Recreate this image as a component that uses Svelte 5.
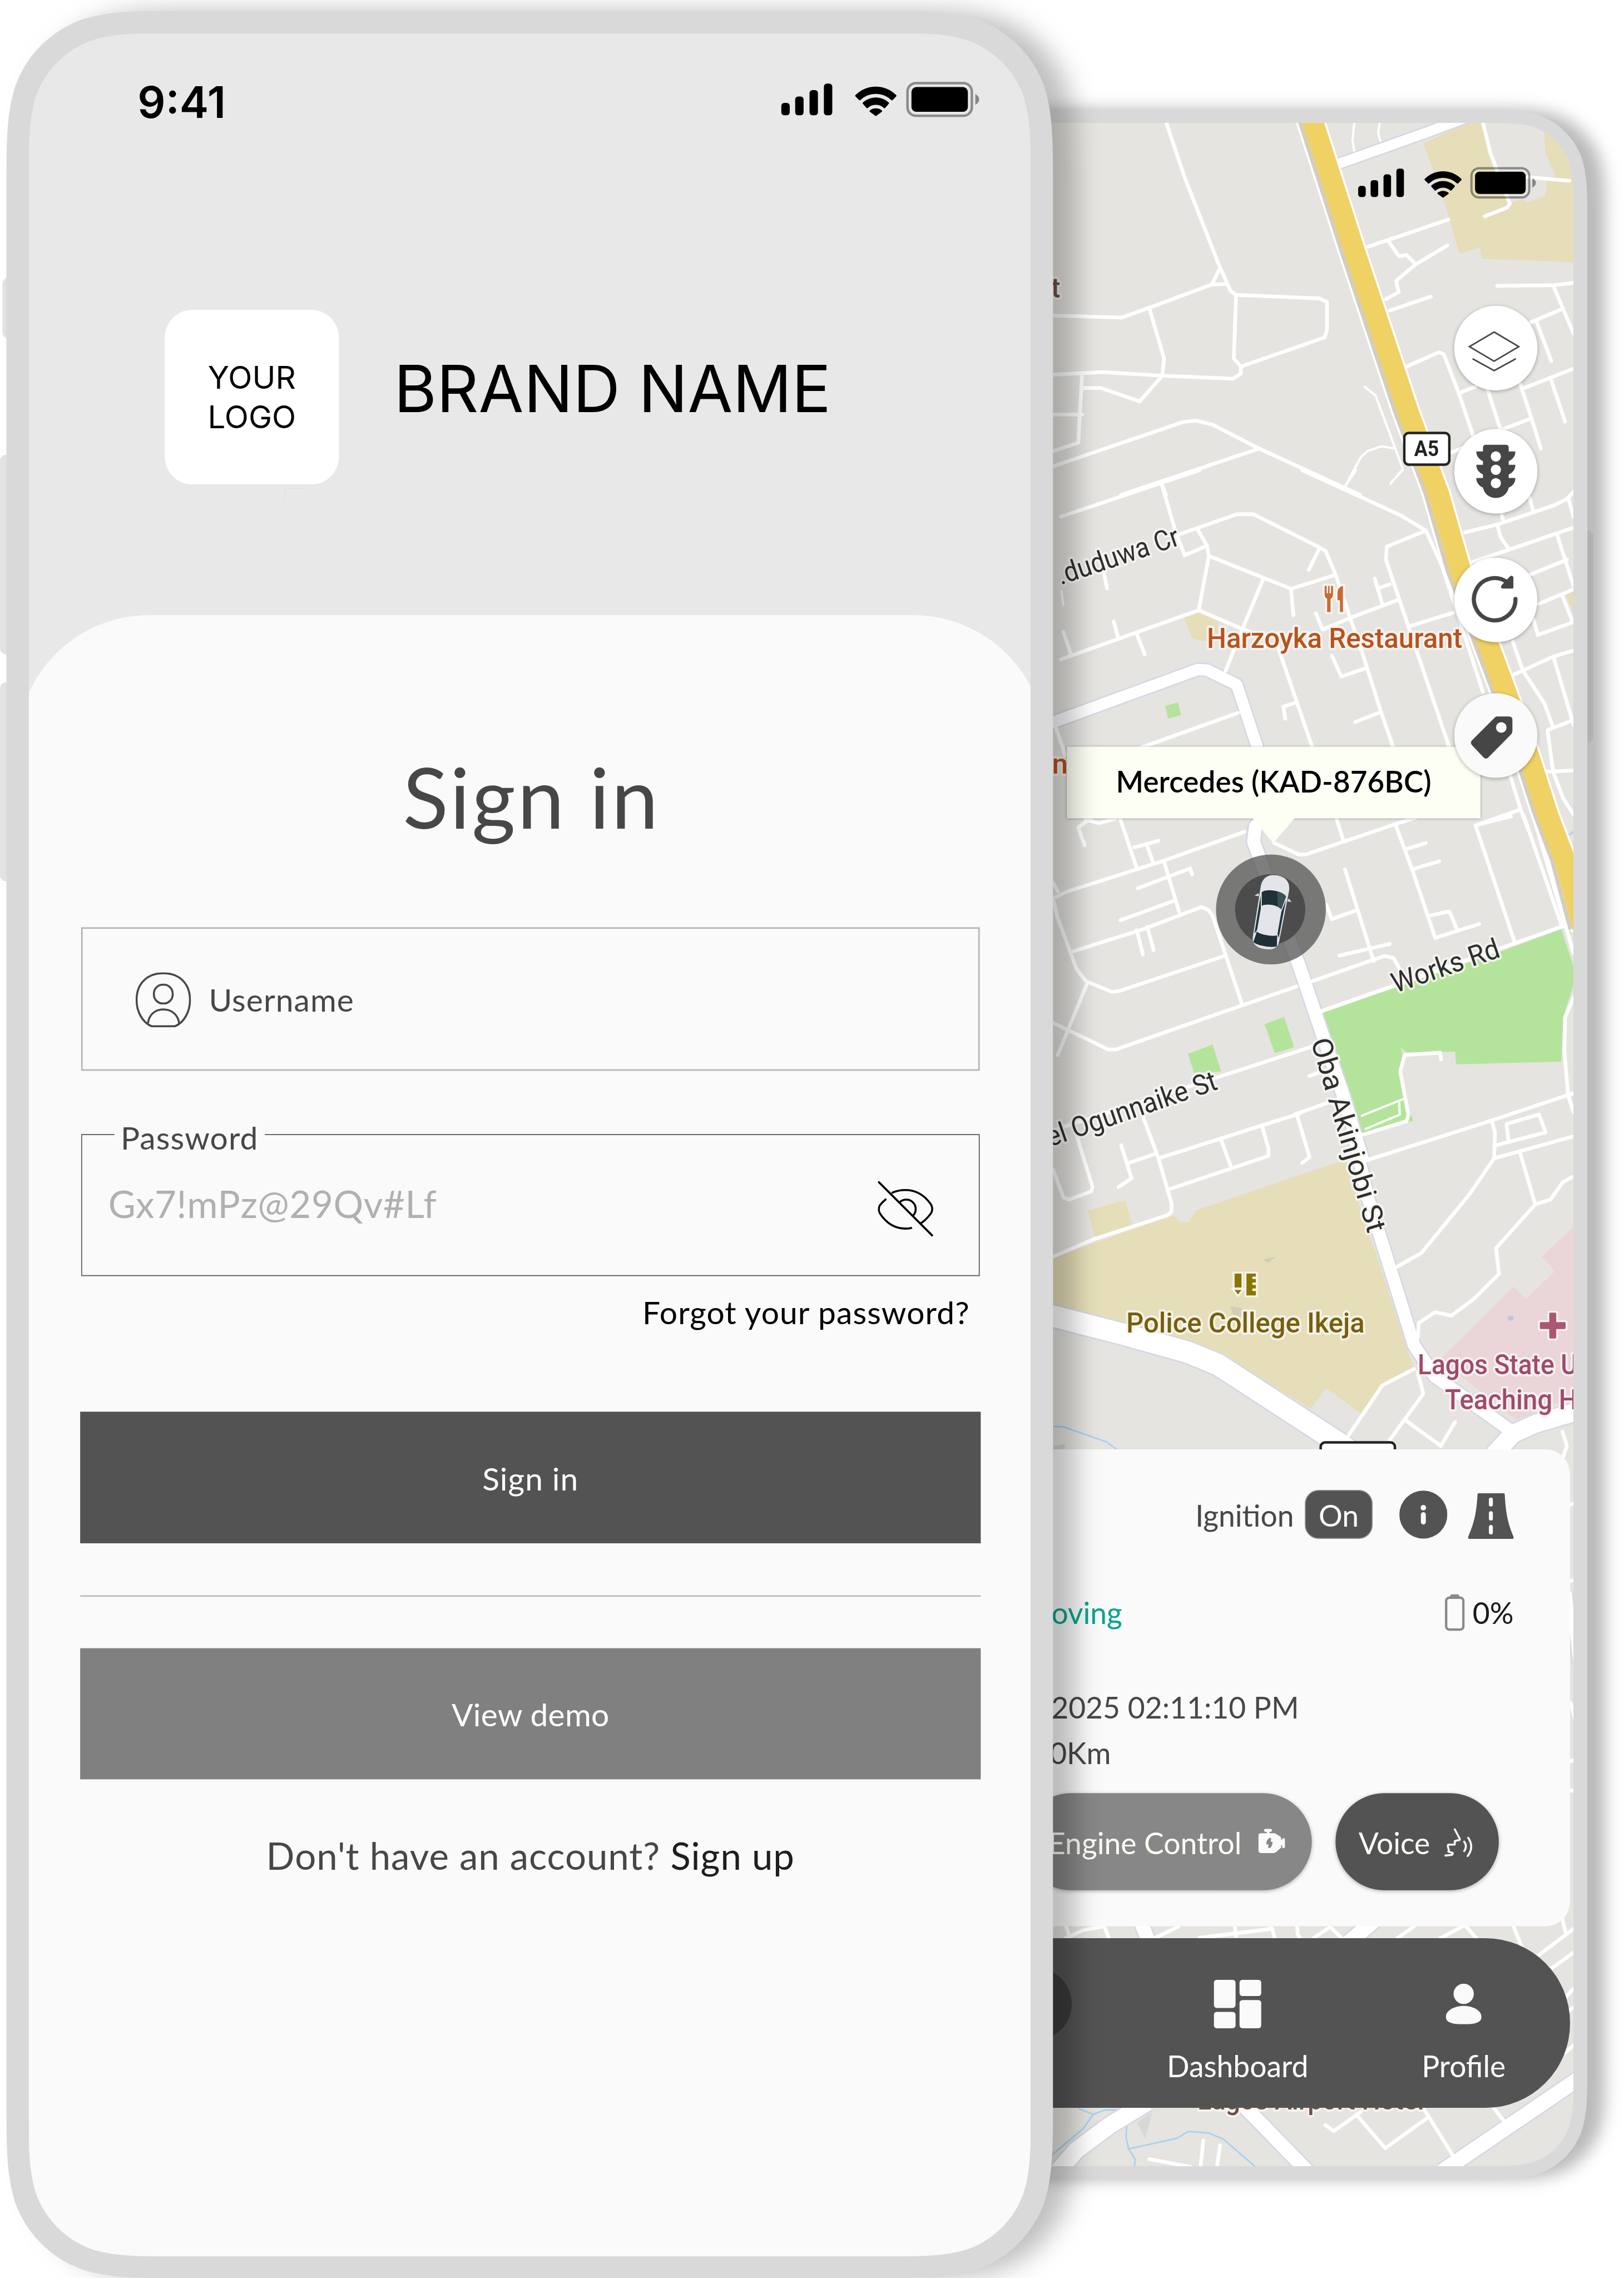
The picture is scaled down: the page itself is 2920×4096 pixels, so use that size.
<script>
  // Continuous-curvature rounded rectangle, as used for device outlines.
  function squircle(x, y, w, h, r) {
    const a = 1.528665 * r, b = 1.088493 * r, c = 0.868407 * r;
    const d = 0.631494 * r, e = 0.074911 * r, f = 0.372824 * r, g = 0.16906 * r;
    const X = x + w, Y = y + h;
    return [
      `M${x + a} ${y}L${X - a} ${y}`,
      `C${X - b} ${y} ${X - c} ${y} ${X - d} ${y + e}`,
      `C${X - f} ${y + g} ${X - g} ${y + f} ${X - e} ${y + d}`,
      `C${X} ${y + c} ${X} ${y + b} ${X} ${y + a}`,
      `L${X} ${Y - a}C${X} ${Y - b} ${X} ${Y - c} ${X - e} ${Y - d}`,
      `C${X - g} ${Y - f} ${X - f} ${Y - g} ${X - d} ${Y - e}`,
      `C${X - c} ${Y} ${X - b} ${Y} ${X - a} ${Y}`,
      `L${x + a} ${Y}C${x + b} ${Y} ${x + c} ${Y} ${x + d} ${Y - e}`,
      `C${x + f} ${Y - g} ${x + g} ${Y - f} ${x + e} ${Y - d}`,
      `C${x} ${Y - c} ${x} ${Y - b} ${x} ${Y - a}`,
      `L${x} ${y + a}C${x} ${y + b} ${x} ${y + c} ${x + e} ${y + d}`,
      `C${x + g} ${y + f} ${x + f} ${y + g} ${x + d} ${y + e}`,
      `C${x + c} ${y} ${x + b} ${y} ${x + a} ${y}Z`,
    ].join('');
  }

  const backOuter = squircle(0, 0, 1931, 4184, 155);
  const backInner = `path("${squircle(0, 0, 1875, 4130, 125)}")`;
  const frontOuter = squircle(0, 0, 2115, 4582, 240);
  const frontInner = `path("${squircle(0, 0, 2025, 4493, 200)}")`;

  // Each map tile has its own origin and scale; shapes are listed in tile units.
  const tiles = [
    {
      x: 2100, y: 200, sx: 0.7538, sy: 0.5102,
      sand: ['1030,175 1150,94 1192,94 1213,215 1262,415 1300,395 1305,412 1357,385 1362,325 1385,305 1357,210 1353,94 1433,94 1433,648 1320,640 1187,633 1182,588 1127,613 1085,400'],
      wide: [{ p: '1170,60 1040,132 800,258', w: 20 }],
      minor: [
        '340,90 390,310 480,650 513,760 528,776 752,790 772,804 772,915 765,945 541,1060 541,1088 520,1108 330,1096 170,1082 38,1092',
        '485,670 463,735 503,733', '463,735 295,827 222,866 38,858',
        '295,827 335,1028 330,1096 270,1198 165,1145 115,1145', '528,776 522,1028 541,1060',
        '115,1095 105,1362 38,1395', '38,1250 115,1250',
        '38,1455 385,1280 420,1274 465,1290 590,1385 860,1568', '590,1385 220,1568', '328,1522 340,1568',
        '882,585 1097,478', '935,560 965,623 985,618 1010,655 957,720 964,765 930,793',
        '1010,655 1095,580', '940,838 1050,783', '985,1060 1072,1003 1085,1012 1125,1165 1165,1340',
        '1125,1165 1170,1140', '1190,94 1210,215 1262,415 1255,430 1195,465', '1310,310 1422,324',
        '1228,740 1380,738 1433,728', '1380,745 1433,930', '1405,830 1318,885', '1333,880 1373,1038',
        '1433,1068 1295,1148', '1373,1115 1410,1278', '1200,1140 1237,1310',
        '1290,1130 1320,1265 1345,1385', '1320,1265 1240,1310', '1105,1400 1140,1380',
      ],
      thin: [
        '845,94 840,165 845,205', '913,94 909,135 915,165', '873,1140 902,1175 975,1465 942,1525',
        '955,1385 918,1376 880,1395 862,1420 820,1535',
      ],
    },
    {
      x: 2100, y: 950, sx: 0.7538, sy: 0.5102,
      sand: ['388,585 428,567 480,598 478,650 452,680 410,668', '1410,490 1433,475 1433,565'],
      green: ['338,935 372,920 381,970 346,985'],
      wide: [{ p: '20,1008 425,790 450,792 530,850 590,1120', w: 23 }],
      minor: [
        '430,0 58,185', '328,52 365,240', '365,240 390,338 450,300',
        '365,260 530,175 575,175 750,305 768,320 795,415 835,590 870,740 917,960 950,1100',
        '750,315 723,395', '795,415 675,470 455,340 450,300 425,235', '455,340 428,555 58,750',
        '428,555 545,630 600,660', '675,470 682,575', '200,600 212,665', '262,650 283,730',
        '65,640 85,730', '173,400 182,468', '705,0 970,180 1037,240 932,303 930,355 990,620 1100,1100',
        '1037,240 1080,380 1190,880', '990,620 1110,565', '960,515 835,585 760,632 742,568',
        '900,430 920,530', '910,468 940,452', '640,700 690,915 733,1100', '690,920 655,937 660,985',
        '785,735 810,818 875,785', '917,958 847,998', '533,962 272,1100', '45,1020 70,1130',
        '600,435 545,630 500,795',
        '1142,247 1230,215 1380,140 1415,115 1433,85', '1315,110 1325,165', '1240,175 1245,205',
        '1418,110 1433,185', '1160,365 1255,318 1433,228', '1228,215 1237,265 1260,315',
        '1390,262 1433,460', '1315,415 1415,355', '1340,530 1433,472', '1402,495 1430,600',
        '1433,602 1337,653 1325,590', '1270,680 1297,795 1355,925 1378,1020', '1270,812 1380,738 1433,715',
        '1380,745 1433,1010', '1433,990 1363,1030 1378,1195 1405,1300 1433,1365', '1355,1195 1433,1190',
        '1240,1100 1290,1340 1310,1420', '1290,1170 1335,1400', '1175,1405 1290,1345',
      ],
      thin: ['850,0 820,65', '975,0 942,52', '60,480 65,535'],
      water: ['1420,1445 1433,1432'],
    },
    {
      x: 2100, y: 1650, sx: 0.7538, sy: 0.4464,
      green: [
        '750,890 945,780 1240,610 1400,510 1433,680 1433,760 1405,910 1400,1110 1118,1122 1115,1065 985,1068 968,1045 975,1080 965,1155 980,1270 1003,1378 860,1440 845,1300 800,1100 765,930',
        '604,940 657,908 684,1045 632,1072', '399,1075 465,1033 488,1155 415,1160',
      ],
      wide: [{ p: '600,15 580,45 575,115 600,230 700,690 760,990 815,1260 870,1568', w: 26 }],
      minor: [
        '145,0 105,50 122,130', '125,15 160,30 205,10', '215,0 262,235', '255,140 320,110',
        '290,135 305,205', '38,370 75,340 335,200 550,70', '335,205 375,430', '265,325 405,235 410,262',
        '365,380 218,470', '93,610 280,510 435,410 455,425 465,450 545,855', '262,515 278,625',
        '290,500 307,605', '38,380 50,460 100,690 125,745 195,795 215,790 500,630', '130,750 50,1080',
        '38,935 185,1055 205,1055 545,855 690,770', '725,750 925,632 950,640 970,700',
        '630,120 695,172 715,172 955,35 1010,5', '795,0 815,105', '955,35 1000,240 1062,550 1180,487',
        '980,150 1037,120', '1000,240 1073,203', '1045,450 1100,430 1120,510', '1170,40 1275,570',
        '1170,40 1265,0', '1300,0 1400,490', '1325,0 1433,620', '820,240 897,655',
        '770,400 785,465 850,425', '805,630 940,577', '750,885 1240,595 1433,480',
        '1433,820 1410,910 1408,1060 1418,1260 1433,1340', '735,1040 480,1180 38,1420',
        '725,1175 750,1160', '800,1280 685,1350', '38,300 50,340',
        '1078,1100 1075,1070 980,1080 968,1155 990,1350 985,1380 860,1445',
      ],
      thin: ['865,1355 975,1280', '965,1290 967,1350 875,1415', '750,890 1240,600'],
    },
    {
      x: 2100, y: 2250, sx: 0.7538, sy: 0.4783,
      sand: [
        '38,610 350,435 365,437 380,460 400,460 420,410 800,207 825,210 870,450 905,600 985,990 1005,1080 920,1145 865,1272 770,1162 728,1248 480,1010 230,885 38,805',
        '130,412 230,367 250,475 152,528',
      ],
      pink: ['1433,480 1348,605 1383,668 1305,785 1272,732 1075,1040 1280,1295 1380,1230 1433,1200'],
      blobFill: '#d5cdb5',
      blob: ['600,618 635,605 615,632', '512,815 545,822 540,860 520,850'],
      wide: [
        { p: '845,100 880,350 910,500 960,750 1005,980 1060,1110 1290,1370', w: 25 },
        { p: '20,850 230,935 400,1010 480,1062 800,1390 900,1500', w: 43 },
        { p: '1453,1255 1330,1312 1270,1355 1220,1440', w: 36 },
      ],
      minor: [
        '275,0 320,190 355,380 355,415 345,430 150,530 38,605', '38,240 65,355 80,365 140,330 143,310 100,90',
        '220,135 248,275 213,312', '240,210 310,172', '320,190 700,0', '487,108 513,220',
        '350,320 615,180 615,150 597,50', '690,0 725,185 705,210', '875,200 1210,32 1433,-85',
        '1215,40 1222,80 1220,190 1155,340 1025,590 958,650', '1225,135 1358,80 1340,5 1253,45 1258,110',
        '1220,190 1433,97', '1290,170 1330,385',
        '1433,267 1405,290 1370,365 1330,385 1225,570 1233,678 1165,785 1105,855 1062,840 1018,885 1015,950',
        '1005,1080 920,1150 830,1360', '1015,1095 1030,1185 940,1380', '985,1300 1077,1405 1115,1305',
        '1403,1345 1415,1405 1405,1450',
      ],
      water: ['38,1323 65,1325 180,1388 208,1420'],
    },
    {
      x: 2100, y: 2880, sx: 0.7538, sy: 0.7015,
      wide: [{ p: '1420,480 1440,690', w: 12 }],
      minor: ['1420,230 1440,225', '1420,450 1440,445', '1420,970 1440,962', '1420,1055 1440,1050', '1425,800 1440,860'],
      blobFill: '#d2d1cd',
      blob: ['40,60 70,55 66,70 38,72'],
    },
    {
      x: 2100, y: 3850, sx: 0.7538, sy: 0.4809,
      blobFill: '#d7d7d5',
      blob: ['303,870 262,915 285,980'],
      wide: [
        { p: '270,60 298,170', w: 28 }, { p: '910,50 820,170', w: 30 },
        { p: '290,830 190,925 100,1030 50,1120', w: 34 }, { p: '540,830 720,1120', w: 28 },
        { p: '1453,723 1080,1120', w: 30 },
      ],
      minor: [
        '72,88 82,135', '70,140 120,105 165,92', '175,90 187,140', '372,92 310,138', '525,88 527,130',
        '430,138 625,100 620,90', '625,100 632,140', '692,90 693,122 700,140', '735,140 780,92 812,140',
        '1005,90 960,140', '1145,90 1172,140', '1135,90 1075,140', '1272,90 1295,180', '1433,100 1340,210',
        '1403,60 1412,120', '1433,200 1370,270', '1433,350 1405,400', '1433,430 1420,445',
        '1433,590 1410,620', '768,925 790,950 862,870', '850,880 928,1022 1045,890 1108,1050',
        '1045,890 1030,855', '1220,855 1245,905', '295,1068 405,1100', '440,990 433,1098', '485,1010 477,1098',
      ],
      water: [
        '35,1050 118,940 145,880 105,855', '145,880 175,862 215,860',
        '235,925 233,975 240,1025 258,1070 255,1100', '240,1025 370,980 400,952 455,958 495,985 578,1098',
      ],
    },
  ];

  function place(tile, points) {
    return points
      .split(' ')
      .map((pair) => {
        const [px, py] = pair.split(',').map(Number);
        return `${(tile.x + px * tile.sx).toFixed(1)},${(tile.y + py * tile.sy).toFixed(1)}`;
      })
      .join(' ');
  }

  const highway = '2648,225 2654,248 2737,506 2846,833 2908,1000 2952,1154 3042,1394 3091,1532 3129,1650 3163,1739 3200,1878';
</script>

{#snippet statusIcons()}
  <svg class="status-icons" viewBox="0 0 402 72">
    <rect x="2" y="43" width="17" height="25" rx="6" />
    <rect x="30" y="30" width="17" height="38" rx="6" />
    <rect x="59" y="17" width="17" height="51" rx="6" />
    <rect x="88" y="4" width="17" height="64" rx="6" />
    <path d="M193 10c16 0 30 6 41 17 1 1 1 2 0 3l-7 7c-1 1-2 1-3 0a45 45 0 0 0-62 0c-1 1-2 1-3 0l-7-7c-1-1-1-2 0-3 11-11 25-17 41-17z" />
    <path d="M193 32c10 0 19 4 26 10 1 1 1 2 0 3l-7 8c-1 1-2 1-3 0a24 24 0 0 0-32 0c-1 1-2 1-3 0l-7-8c-1-1-1-2 0-3 7-6 16-10 26-10z" />
    <path d="M193 54c5 0 9 2 12 4 1 1 1 2 0 3l-11 8c-1 1-1 1-2 0l-11-8c-1-1-1-2 0-3 3-2 7-4 12-4z" />
    <rect x="257" y="3" width="130" height="66" rx="17" fill="none" stroke="#000" stroke-opacity=".4" stroke-width="5" />
    <rect x="265" y="11" width="114" height="50" rx="10" />
    <path d="M394 25c5 3 8 7 8 11s-3 8-8 11z" fill-opacity=".42" />
  </svg>
{/snippet}

<div class="viewport">
  <div class="stage">
    <section class="device back">
      <svg class="shell" viewBox="0 0 1931 4184">
        <path d={backOuter} />
      </svg>
      <span class="side-key power"></span>
      <div class="screen map-screen" style:clip-path={backInner}>
        <svg class="map" viewBox="1305 248 1875 4130">
          <rect x="1305" y="248" width="1875" height="4130" fill="#e5e4e0" />
          {#each tiles as tile}
            {#each tile.sand ?? [] as p}<polygon points={place(tile, p)} fill="#e5deb9" />{/each}
            {#each tile.green ?? [] as p}<polygon points={place(tile, p)} fill="#b4e49b" />{/each}
            {#each tile.pink ?? [] as p}<polygon points={place(tile, p)} fill="#ead5d9" />{/each}
            {#each tile.blob ?? [] as p}<polygon points={place(tile, p)} fill={tile.blobFill} />{/each}
            {#each tile.water ?? [] as p}<polyline class="water" points={place(tile, p)} />{/each}
          {/each}
          {#each tiles as tile}
            {#each tile.wide ?? [] as r}<polyline class="casing" points={place(tile, r.p)} stroke-width={r.w + 6} />{/each}
          {/each}
          {#each tiles as tile}
            {#each tile.minor ?? [] as p}<polyline class="road" points={place(tile, p)} />{/each}
            {#each tile.thin ?? [] as p}<polyline class="road thin" points={place(tile, p)} />{/each}
            {#each tile.wide ?? [] as r}<polyline class="avenue" points={place(tile, r.p)} stroke-width={r.w} />{/each}
          {/each}
          <ellipse cx="3053" cy="2664" rx="6" ry="5" fill="#b9c6dc" />
          <polyline points={highway} fill="none" stroke="#fff" stroke-width="50" />
          <polyline points={highway} transform="translate(-33 0)" fill="none" stroke="#fff" stroke-width="4" />
          <polyline points={highway} transform="translate(-26 0)" fill="none" stroke="#d3cdbb" stroke-width="8" />
          <polyline points={highway} fill="none" stroke="#f0d163" stroke-width="42" />

          <g class="shield">
            <rect x="2838" y="875" width="91" height="64" rx="9" />
            <rect x="2669" y="2915" width="150" height="70" rx="9" />
            <text x="2858" y="922" textLength="50" lengthAdjust="spacingAndGlyphs">A5</text>
          </g>

          <g class="label street">
            <text transform="translate(2144 1182) rotate(-18.5)" textLength="256" lengthAdjust="spacingAndGlyphs">.duduwa Cr</text>
            <text transform="translate(2122 2318) rotate(-19)" textLength="361" lengthAdjust="spacingAndGlyphs">el Ogunnaike St</text>
            <text transform="translate(2820 2007) rotate(-19)" textLength="227" lengthAdjust="spacingAndGlyphs">Works Rd</text>
            <text transform="translate(2649 2104) rotate(73.5)" textLength="407" lengthAdjust="spacingAndGlyphs">Oba Akinjobi St</text>
          </g>
          <g class="label food">
            <text x="2439" y="1310" textLength="516" lengthAdjust="spacingAndGlyphs">Harzoyka Restaurant</text>
            <text x="2158" y="1563" text-anchor="end">n</text>
          </g>
          <g class="label lodging">
            <text x="2143" y="601" text-anchor="end">t</text>
            <text x="2420" y="4263" textLength="458" lengthAdjust="spacingAndGlyphs">Lagos Airport Hotel</text>
          </g>
          <g class="label school">
            <text x="2276" y="2693" textLength="482" lengthAdjust="spacingAndGlyphs">Police College Ikeja</text>
          </g>
          <g class="label clinic">
            <text x="2865" y="2777" textLength="323" lengthAdjust="spacingAndGlyphs">Lagos State U</text>
            <text x="2920" y="2848" textLength="268" lengthAdjust="spacingAndGlyphs">Teaching H</text>
          </g>

          <g class="poi" fill="#c96a30">
            <path d="M2677 1184h4v15h3v-15h3v15h3v-15h4v17c0 5-2 8-5 9v27h-7v-27c-3-1-5-4-5-9z" />
            <path d="M2714 1184v53h-6v-24h-5v-15c0-8 5-13 11-14z" />
          </g>
          <g class="poi" fill="#8a7500">
            <path d="M2495 2574h14v28h-14zM2495 2607h14l-7 9z" />
            <path d="M2519 2574h19v6h-7v5h7v7h-7v5h7v7h-7v5h7v9h-19z" />
          </g>
          <path class="poi" fill="#ac5674" d="M3133 2653h10q2 0 2 2v17h17q2 0 2 2v10q0 2-2 2h-17v17q0 2-2 2h-10q-2 0-2-2v-17h-17q-2 0-2-2v-10q0-2 2-2h17v-17q0-2 2-2z" />

          <circle cx="2568.5" cy="1838" r="111" fill="#555" fill-opacity=".76" />
          <circle cx="2567" cy="1838" r="71" fill="#444" fill-opacity=".85" />
          <g transform="translate(2568 1844) rotate(10)">
            <path d="M-31-34l-7 6 9 0zM31-34l7 6-9 0z" fill="#dfe1e6" />
            <path d="M0-76c18 0 28 9 29 26L27 55c-1 13-9 20-27 20s-26-7-27-20l-2-105c1-17 11-26 29-26z" fill="#e3e5ea" />
            <path d="M-25-37c8-10 42-10 50 0l-5 27c-8-7-32-7-40 0z" fill="#1d3136" />
            <path d="M6-44c8 1 15 3 19 7l-5 27-8-4z" fill="#3c5157" />
            <path d="M-26-30l5 25v45l-4 8zM26-30l-5 25v45l4 8z" fill="#20363b" />
            <path d="M-21 43c8 5 34 5 42 0l3 22c-8 6-40 6-48 0z" fill="#1d3136" />
          </g>
        </svg>

        <div class="status">{@render statusIcons()}</div>

        <div class="controls">
          <button class="round layers" aria-label="Layers">
            <svg viewBox="0 0 168 171" fill="none" stroke="#464646" stroke-width="3">
              <path d="M80.500 53l50 29.500-50 29.500-50-29.500zM37 107l43.500 24 44-24" />
            </svg>
          </button>
          <button class="round traffic" aria-label="Traffic">
            <svg viewBox="0 0 168 171" fill="#464646">
              <path d="M64 32h40q6 0 6 6v7.500h13.500c0 9-5 16-13.500 19.500v7.500h13.500c0 9-5 16-13.500 19.500v7h13.500c0 9-5 16-13.500 19.500-3 13-13 21-26 21s-23-8-26-21c-8-3.500-13.500-10.500-13.500-19.500H58v-7c-8-3.500-13.500-10.500-13.500-19.500H58V65c-8-3.500-13.500-10.500-13.500-19.500H58V38q0-6 6-6z" />
              <circle cx="84" cy="55.500" r="10.300" fill="#fff" />
              <circle cx="84" cy="82.500" r="10.300" fill="#fff" />
              <circle cx="84" cy="109.500" r="10.300" fill="#fff" />
            </svg>
          </button>
          <button class="round refresh" aria-label="Refresh">
            <svg viewBox="0 0 168 171" fill="none" stroke="#464646" stroke-width="8.300" stroke-linecap="round">
              <path d="M123.700 83.500a42 42.700 0 1 1-16-33" />
              <path d="M96 55.500l16.500-17.500q2-2 4.500-1 2.500 1 2.500 4v18.500q0 3-3 3H98q-3 0-3.500-2.500-.5-2.500 1.500-4.500z" fill="#464646" stroke="none" />
            </svg>
          </button>
          <button class="round tag" aria-label="Tag">
            <svg viewBox="0 0 168 171" fill="#464646">
              <path fill-rule="evenodd" d="M86 47h24.500q7 0 7 7v22.500q0 4-3 7L69 129.500q-5 5-10 0L36 105q-5-5 0-10l45-45q2-3 5-3zM95 58.500a10.700 10.700 0 1 0 0 21.400 10.700 10.700 0 0 0 0-21.400z" />
            </svg>
          </button>
        </div>

        <div class="tooltip">Mercedes (KAD-876BC)</div>

        <div class="panel">
          <div class="row ignition">
            <span class="caption">Ignition</span>
            <span class="badge">On</span>
            <svg class="info" viewBox="0 0 97 98">
              <circle cx="48.5" cy="49" r="48.5" fill="#535353" />
              <circle cx="48.5" cy="35" r="5.5" fill="#fafafa" />
              <path d="M48.500 49v15" stroke="#fafafa" stroke-width="10" stroke-linecap="round" />
            </svg>
            <svg class="lane" viewBox="0 0 92 92">
              <path d="M21 0h51q2 0 2 2c2 40 7 60 18 86q1 4-2 4H2q-3 0-2-4C11 62 17 42 19 2q0-2 2-2z" fill="#535353" />
              <path d="M46 12.500v10M46 40v11M46 68v11" stroke="#fafafa" stroke-width="8" stroke-linecap="round" />
            </svg>
          </div>
          <div class="row state">
            <span class="moving">Moving</span>
            <span class="charge">
              <svg viewBox="0 0 40 74">
                <rect x="2.5" y="7" width="35" height="64.5" rx="7" fill="none" stroke="#8a8a8a" stroke-width="5" />
                <path d="M12 1q1-1 3-1h10q2 0 3 1l3 6H9z" fill="#8a8a8a" />
              </svg>
              0%
            </span>
          </div>
          <div class="stamp">2025 02:11:10 PM</div>
          <div class="distance">0Km</div>
          <div class="row actions">
            <button class="pill engine">
              Engine Control
              <svg viewBox="0 0 54 50" fill="#fafafa">
                <path d="M14.500 0h10q3 0 3 3t-3 3h-2v3h11l10 6q2.500 1.500 2.500 4v3h2v-1q0-2 3-2t3 2v16q0 2-3 2t-3-2v-4h-2v5l-9 8q-3 3-6 3H6q-6 0-6-6V15q0-6 6-6h11V6h-2.500q-3 0-3-3t3-3z" />
                <path d="M22 19q4-2 4 1l-1 6q4 0 4 2l-2 7q-3 5-6 4-2-1 0-7-5 0-5-3 1-7 6-10z" fill="#878787" />
              </svg>
            </button>
            <button class="pill voice">
              Voice
              <svg viewBox="0 0 58 58" fill="none" stroke="#fafafa" stroke-width="4" stroke-linecap="round" stroke-linejoin="round">
                <path d="M21 2l10 19q1 3-3 3l-7 2v7H9q-2 0-2 3l1 5q2 2 0 6 4 1 9 3 0 4-5 4l-10 1" />
                <path d="M40 27q7 9 0 19M48 19q13 19-1 37" />
              </svg>
            </button>
          </div>
        </div>

        <nav class="tabs">
          <div class="tab current"><span class="dot"></span></div>
          <div class="tab">
            <span class="glyph">
              <svg width="96" height="98" viewBox="0 0 96 98" fill="#fafafa">
                <rect width="44" height="57" rx="6" />
                <rect x="52" width="44" height="33" rx="6" />
                <rect y="65" width="44" height="33" rx="6" />
                <rect x="52" y="41" width="44" height="57" rx="6" />
              </svg>
            </span>
            Dashboard
          </div>
          <div class="tab">
            <span class="glyph">
              <svg width="72" height="82" viewBox="0 0 72 82" fill="#fafafa">
                <circle cx="36" cy="20.5" r="20.5" />
                <path d="M36 45c20 0 36 10 36 22 0 11-12 15-36 15S0 78 0 67c0-12 16-22 36-22z" />
              </svg>
            </span>
            Profile
          </div>
        </nav>
      </div>
    </section>

    <section class="device front">
      <span class="side-key mute"></span>
      <span class="side-key vol-up"></span>
      <span class="side-key vol-down"></span>
      <svg class="shell" viewBox="0 0 2115 4582">
        <path d={frontOuter} />
      </svg>
      <div class="screen login-screen" style:clip-path={frontInner}>
        <div class="status">
          <span class="clock">9:41</span>
          {@render statusIcons()}
        </div>
        <header class="brand">
          <div class="logo">YOUR<br />LOGO</div>
          <div class="brand-name">BRAND NAME</div>
        </header>
        <main class="sheet">
          <h1>Sign in</h1>
          <div class="field username">
            <svg class="user" viewBox="0 0 112 112" fill="none" stroke="#484646" stroke-width="4">
              <path d="M32 109C14 101 2 80 2 56 2 22 24 2 56 2s54 20 54 54c0 24-12 45-30 53z" stroke-linejoin="round" />
              <rect x="37" y="25" width="38" height="38" rx="18" />
              <path d="M25 103c2-17 14-28 31-28s30 11 32 28" />
            </svg>
            Username
          </div>
          <div class="field password">
            <span class="float-label">Password</span>
            <span class="placeholder">Gx7!mPz@29Qv#Lf</span>
            <svg class="eye" viewBox="0 0 112 112" fill="none" stroke="#000" stroke-width="4">
              <path d="M1 1l110 110" />
              <path d="M28 24c8-4 17-6 28-6 23 0 39 11 52 30q4 9 0 16c-6 9-13 16-22 22" />
              <path d="M17 36C12 40 8 44 4 49q-4 8 0 16c13 20 29 31 52 31 5 0 9 0 13-2" />
              <path d="M44 43a19 19 0 0 1 27 27" />
            </svg>
          </div>
          <a class="forgot">Forgot your password?</a>
          <button class="cta primary">Sign in</button>
          <hr />
          <button class="cta secondary">View demo</button>
          <p class="signup">Don't have an account? <b>Sign up</b></p>
        </main>
      </div>
    </section>
  </div>
</div>

<style>
  :global(body) {
    background: #fff;
  }
  .viewport {
    width: 2920px;
    height: 4096px;
    overflow: hidden;
  }
  .stage {
    position: relative;
    width: 3282px;
    height: 4604px;
    transform: scale(0.8897);
    transform-origin: 0 0;
    font-family: Lato, 'Liberation Sans', sans-serif;
    color: #484646;
  }
  button {
    font: inherit;
    letter-spacing: inherit;
    border: 0;
    margin: 0;
    padding: 0;
  }
  svg {
    display: block;
    flex: none;
  }

  /* Devices overlap, so each is pinned on the stage. */
  .device {
    position: absolute;
    box-sizing: border-box;
  }
  .back {
    left: 1277px;
    top: 221px;
    width: 1931px;
    height: 4184px;
    padding: 27px 28px;
  }
  .front {
    left: 13px;
    top: 22px;
    width: 2115px;
    height: 4582px;
    padding: 45px;
  }
  .shell {
    position: absolute;
    inset: 0;
    width: 100%;
    height: 100%;
    overflow: visible;
    fill: #d9d9d9;
  }
  .back .shell {
    filter: drop-shadow(36px 0 16px rgba(0, 0, 0, 0.27));
  }
  .front .shell {
    filter: drop-shadow(46px 0 25px rgba(0, 0, 0, 0.25));
  }
  .side-key {
    position: absolute;
    background: #e3e3e3;
  }
  .power {
    right: -12px;
    top: 851px;
    width: 12px;
    height: 429px;
    border-radius: 0 12px 12px 0;
    background: #b1b1b1;
  }
  .mute,
  .vol-up,
  .vol-down {
    border-radius: 12px 0 0 12px;
    width: 40px;
    left: -13px;
  }
  .mute {
    left: -8px;
    top: 539px;
    height: 123px;
  }
  .vol-up {
    top: 897px;
    height: 403px;
  }
  .vol-down {
    top: 1357px;
    height: 402px;
  }
  .screen {
    position: relative;
    display: flex;
    flex-direction: column;
    overflow: hidden;
  }
  .map-screen {
    width: 1875px;
    height: 4130px;
  }
  .login-screen {
    width: 2025px;
    height: 4493px;
    background: #e8e8e8;
  }

  /* Map */
  .map {
    position: absolute;
    inset: 0;
    width: 1875px;
    height: 4130px;
  }
  .map polyline {
    fill: none;
    stroke-linejoin: round;
  }
  .road {
    stroke: #fff;
    stroke-width: 7.5;
    stroke-linecap: round;
  }
  .thin {
    stroke-width: 4.5;
  }
  .avenue {
    stroke: #fff;
  }
  .casing {
    stroke: #d5d8e4;
  }
  .water {
    stroke: #a5d2f0;
    stroke-width: 3;
  }
  .label text {
    font-family: Roboto, 'Liberation Sans', sans-serif;
    font-size: 57px;
    paint-order: stroke;
    stroke: rgba(247, 246, 242, 0.85);
    stroke-width: 9px;
    stroke-linejoin: round;
  }
  .street text {
    fill: #2e2e2e;
  }
  .food text {
    fill: #b8521c;
  }
  .lodging text {
    fill: #6f5143;
  }
  .school text {
    fill: #77600a;
  }
  .clinic text {
    fill: #a04a6c;
  }
  .food text,
  .school text,
  .clinic text,
  .lodging text {
    font-weight: 500;
  }
  .poi {
    paint-order: stroke;
    stroke: rgba(247, 246, 242, 0.9);
    stroke-width: 8;
  }
  .shield rect {
    fill: #fff;
    stroke: #222;
    stroke-width: 5;
  }
  .shield text {
    font: 700 43px Roboto, sans-serif;
    fill: #222;
  }

  /* Map screen overlays */
  .status {
    position: relative;
    display: flex;
    justify-content: space-between;
  }
  .map-screen .status {
    justify-content: flex-end;
    padding: 89px 76px 0 0;
  }
  .map-screen .status-icons {
    width: 361px;
    height: 65px;
  }
  .controls {
    position: relative;
    z-index: 1;
    display: flex;
    flex-direction: column;
    align-self: flex-end;
    margin: 216px 73px 0 0;
  }
  .round {
    width: 168px;
    height: 171px;
    border-radius: 50%;
    background: #fff;
    box-shadow: 0 2px 8px rgba(0, 0, 0, 0.3);
  }
  .traffic {
    margin-top: 78px;
  }
  .refresh {
    margin-top: 89px;
  }
  .tag {
    margin-top: 103px;
    background: #fafafa;
  }
  .tooltip {
    position: absolute;
    left: 851px;
    top: 1261px;
    width: 836px;
    height: 145px;
    line-height: 141px;
    text-align: center;
    font-size: 59.5px;
    font-weight: 600;
    letter-spacing: 0.1px;
    color: #000;
    background: #fdfff5;
    box-shadow: 0 1px 5px rgba(0, 0, 0, 0.35);
  }
  .tooltip::after {
    content: '';
    position: absolute;
    left: 375px;
    top: 144px;
    width: 86px;
    height: 51px;
    background: #fdfff5;
    clip-path: polygon(0 0, 100% 0, 49% 100%);
  }
  .panel {
    position: relative;
    box-sizing: border-box;
    margin: auto 7px 24px;
    height: 964px;
    padding: 82px 114px 0;
    background: #fafafa;
    border-radius: 50px;
    font-size: 60px;
    line-height: 76px;
  }
  .row {
    display: flex;
    align-items: center;
  }
  .ignition {
    height: 99px;
    justify-content: flex-end;
  }
  .caption {
    padding-top: 3px;
  }
  .badge {
    box-sizing: border-box;
    width: 137px;
    height: 99px;
    margin: 0 54px 0 22px;
    border: 2px solid #8a8a8a;
    border-radius: 28px;
    background: #535353;
    color: #fff;
    text-align: center;
    line-height: 99px;
  }
  .info {
    width: 97px;
    height: 98px;
  }
  .lane {
    width: 92px;
    height: 92px;
    margin: 7px 0 0 42px;
  }
  .state {
    height: 76px;
    margin-top: 111px;
    justify-content: space-between;
  }
  .moving {
    width: 842px;
    text-align: right;
    color: #00a58c;
  }
  .charge {
    display: flex;
    align-items: center;
    gap: 16px;
    color: #1a1a1a;
  }
  .charge svg {
    width: 40px;
    height: 74px;
  }
  .stamp {
    width: 1199px;
    margin-top: 115px;
    text-align: right;
  }
  .distance {
    width: 819px;
    margin-top: 16px;
    text-align: right;
  }
  .actions {
    margin: 44px 30px 0 0;
    justify-content: flex-end;
    gap: 48px;
  }
  .pill {
    display: flex;
    align-items: center;
    height: 196px;
    border-radius: 98px;
    color: #fdfff5;
    box-shadow: 0 2px 8px rgba(0, 0, 0, 0.3);
    padding-top: 3px;
    box-sizing: border-box;
  }
  .engine {
    background: #878787;
    padding-right: 54px;
    padding-left: 53px;
    gap: 34px;
  }
  .engine svg {
    width: 54px;
    height: 50px;
    margin-top: -5px;
  }
  .voice {
    width: 330px;
    background: #535353;
    padding-right: 52px;
    justify-content: flex-end;
    gap: 29px;
  }
  .voice svg {
    width: 58px;
    height: 58px;
  }
  .tabs {
    position: relative;
    display: flex;
    justify-content: flex-end;
    gap: 57px;
    box-sizing: border-box;
    height: 343px;
    margin: 0 7px 118px;
    padding: 60px 15px 0 0;
    border-radius: 171px;
    background: #535353;
    color: #fff;
    font-size: 60px;
    line-height: 72px;
  }
  .tab {
    width: 400px;
    display: flex;
    flex-direction: column;
    align-items: center;
    gap: 16px;
  }
  .glyph,
  .dot {
    width: 146px;
    height: 146px;
    display: grid;
    place-items: center;
  }
  .dot {
    border-radius: 50%;
    background: #3a3a3a;
    margin-left: 98px;
  }

  /* Login screen */
  .login-screen .status {
    padding: 91px 104px 0 220px;
    height: 100px;
  }
  .login-screen .status-icons {
    width: 402px;
    height: 72px;
    margin-top: 7px;
  }
  .clock {
    font: 600 88.5px/96px Inter, sans-serif;
    color: #000;
  }
  .brand {
    position: relative;
    display: flex;
    align-items: center;
    height: 353px;
    margin: 368px 0 264px;
    padding-left: 275px;
    gap: 111px;
    font-family: Inter, sans-serif;
    color: #000;
  }
  .brand::after {
    content: '';
    position: absolute;
    left: 517px;
    top: 361px;
    width: 40px;
    height: 26px;
    border: solid #dcdcdc;
    border-width: 1px 0 0 1px;
  }
  .logo {
    display: grid;
    place-content: center;
    width: 352px;
    height: 353px;
    border-radius: 56px;
    background: #fff;
    text-align: center;
    font-size: 63.5px;
    line-height: 80px;
  }
  .brand-name {
    font-size: 132px;
    line-height: 160px;
    padding-bottom: 35px;
    white-space: nowrap;
  }
  .sheet {
    display: flex;
    flex-direction: column;
    flex: 1;
    margin: 0 -30px 0 -24px;
    padding: 267px 131px 0 128px;
    border-radius: 268px 268px 0 0;
    background: #fafafa;
    font-size: 64px;
    letter-spacing: 1.2px;
  }
  h1 {
    margin: 0 0 164px;
    font-size: 170px;
    line-height: 198px;
    padding-bottom: 2px;
    font-weight: 400;
    letter-spacing: 3.6px;
    text-indent: 4px;
    text-align: center;
  }
  .field {
    position: relative;
    box-sizing: border-box;
    display: flex;
    align-items: center;
    margin: 0 2px;
  }
  .username {
    height: 290px;
    padding: 0 0 0 107px;
    gap: 36px;
    border: 3px solid #b4b4b4;
  }
  .user {
    width: 112px;
    height: 112px;
    margin-top: 3px;
  }
  .password {
    height: 287px;
    margin-top: 128px;
    padding: 0 92px 0 53px;
    justify-content: space-between;
    border: 2px solid #5a5a5a;
  }
  .float-label {
    position: absolute;
    left: 65px;
    top: -25px;
    width: 304px;
    line-height: 60px;
    text-align: center;
    background: #fafafa;
  }
  .placeholder {
    font-size: 75.5px;
    letter-spacing: 0.7px;
    color: #b0b0b0;
    padding-bottom: 8px;
  }
  .eye {
    width: 112px;
    height: 112px;
    margin-top: 14px;
  }
  .forgot {
    align-self: flex-end;
    margin: 35px 22px 163px 0;
    line-height: 76px;
    color: #000;
  }
  .cta {
    height: 266px;
    color: #fff;
    padding-top: 2px;
  }
  .primary {
    background: #535353;
  }
  .secondary {
    height: 265px;
    letter-spacing: 0.3px;
    background: #808080;
  }
  hr {
    width: 100%;
    height: 3px;
    margin: 105px 0 104px;
    border: 0;
    background: #bababa;
  }
  .signup {
    margin: 109px 0 0;
    font-size: 75.5px;
    letter-spacing: 1.05px;
    line-height: 90px;
    text-align: center;
  }
  .signup b {
    font-weight: 400;
    color: #1e1e1e;
  }
</style>
